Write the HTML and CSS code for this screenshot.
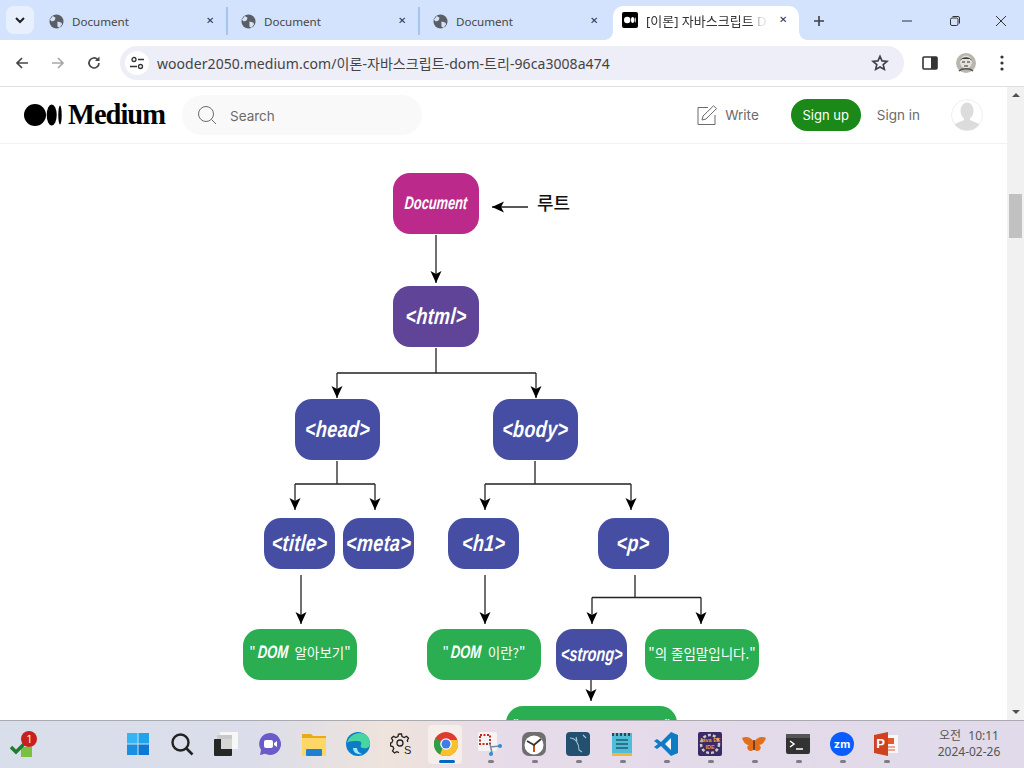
FILE: index.html
```html
<!DOCTYPE html>
<html lang="ko">
<head>
<meta charset="utf-8">
<title>[이론] 자바스크립트 DOM 트리</title>
<link rel="stylesheet" href="styles.css">
</head>
<body>
<div class="tabstrip">
  <div class="tabsearch"><svg width="12" height="12" viewBox="0 0 12 12"><path d="M2 4l4 4 4-4" fill="none" stroke="#1f1f1f" stroke-width="2"/></svg></div>
  <div class="tab tab-first">
    <svg class="favicon" viewBox="0 0 16 16"><circle cx="8" cy="8" r="7.500" fill="#5a5f66"/><path d="M4 2l3 2-1 3-3 1-2-2zM9 8l4 1 1 2-3 4-2-2z" fill="#d3e3fd"/></svg>
    <span class="tabtitle">Document</span><span class="tabclose">✕</span>
  </div>
  <div class="tab">
    <svg class="favicon" viewBox="0 0 16 16"><circle cx="8" cy="8" r="7.500" fill="#5a5f66"/><path d="M4 2l3 2-1 3-3 1-2-2zM9 8l4 1 1 2-3 4-2-2z" fill="#d3e3fd"/></svg>
    <span class="tabtitle">Document</span><span class="tabclose">✕</span>
  </div>
  <div class="tab tab-last">
    <svg class="favicon" viewBox="0 0 16 16"><circle cx="8" cy="8" r="7.500" fill="#5a5f66"/><path d="M4 2l3 2-1 3-3 1-2-2zM9 8l4 1 1 2-3 4-2-2z" fill="#d3e3fd"/></svg>
    <span class="tabtitle">Document</span><span class="tabclose">✕</span>
  </div>
  <div class="tab-active">
    <svg class="favicon-m" viewBox="0 0 16 16"><rect width="16" height="16" rx="2" fill="#000"/><circle cx="5.200" cy="8" r="3.200" fill="#fff"/><ellipse cx="10.600" cy="8" rx="1.600" ry="3" fill="#fff"/><ellipse cx="13.200" cy="8" rx=".6" ry="2.700" fill="#fff"/></svg>
    <span class="tabtitle-active">[이론] 자바스크립트 D</span><span class="tabclose tabclose-active">✕</span>
  </div>
  <svg class="newtab" width="12" height="12" viewBox="0 0 12 12"><path d="M6 1v10M1 6h10" stroke="#3c4043" stroke-width="1.600"/></svg>
  <div class="winctl">
    <svg width="12" height="12" viewBox="0 0 12 12"><path d="M1 6h10" stroke="#333" stroke-width="1"/></svg>
    <svg width="12" height="12" viewBox="0 0 12 12"><rect x="1.500" y="3" width="7.500" height="7.500" rx="1.500" fill="none" stroke="#333"/><path d="M3.500 1.500h5.500a1.500 1.500 0 0 1 1.500 1.500v5.500" fill="none" stroke="#333"/></svg>
    <svg width="12" height="12" viewBox="0 0 12 12"><path d="M1 1l10 10M11 1L1 11" stroke="#333" stroke-width="1"/></svg>
  </div>
</div>
<div class="toolbar">
  <svg class="navicon" viewBox="0 0 16 16"><path d="M14 8H3M8 3L3 8l5 5" fill="none" stroke="#474747" stroke-width="1.700"/></svg>
  <svg class="navicon" viewBox="0 0 16 16"><path d="M2 8h11M8 3l5 5-5 5" fill="none" stroke="#a8a8a8" stroke-width="1.700"/></svg>
  <svg class="navicon" viewBox="0 0 16 16"><path d="M13 8a5 5 0 1 1-1.500-3.600" fill="none" stroke="#474747" stroke-width="1.700"/><path d="M13.500 1.500v4.500H9z" fill="#474747"/></svg>
  <div class="omnibox">
    <span class="siteinfo"><svg width="16" height="16" viewBox="0 0 16 16"><circle cx="5" cy="4.500" r="2" fill="none" stroke="#333" stroke-width="1.300"/><path d="M9 4.500h6M1 11.500h7" stroke="#333" stroke-width="1.500"/><circle cx="11.500" cy="11.500" r="2" fill="none" stroke="#333" stroke-width="1.300"/></svg></span>
    <span class="url">wooder2050.medium.com/이론-자바스크립트-dom-트리-96ca3008a474</span>
    <svg class="star" width="18" height="18" viewBox="0 0 18 18"><path d="M9 2.200l2 4.700 5 .4-3.800 3.300 1.200 4.900L9 13l-4.400 2.500 1.200-4.900L2 7.300l5-.4z" fill="none" stroke="#3c4043" stroke-width="1.600"/></svg>
  </div>
  <svg class="sidepanel" width="16" height="14" viewBox="0 0 16 14"><rect x="1" y="1" width="14" height="12" rx="1" fill="none" stroke="#333" stroke-width="1.600"/><rect x="9" y="1" width="6" height="12" fill="#333"/></svg>
  <svg class="profile" width="20" height="20" viewBox="0 0 20 20"><circle cx="10" cy="10" r="10" fill="#b9b6ae"/><ellipse cx="10" cy="9" rx="6" ry="6.500" fill="#e4e1da"/><path d="M4 8c1-5 11-5 12 0l-2-2H6z" fill="#3a3a3a"/><path d="M6 9h3M11 9h3M8 13h4" stroke="#333" stroke-width="1.200"/><path d="M3 18c3-3 11-3 14 0" stroke="#555" stroke-width="1.500" fill="none"/></svg>
  <svg class="kebab" width="4" height="16" viewBox="0 0 4 16"><circle cx="2" cy="2" r="1.600" fill="#333"/><circle cx="2" cy="8" r="1.600" fill="#333"/><circle cx="2" cy="14" r="1.600" fill="#333"/></svg>
</div>
<div class="viewport">
  <div class="page">
    <header class="mhead">
      <div class="mlogo">
        <svg width="38" height="22" viewBox="0 0 38 22"><circle cx="11" cy="11" r="11" fill="#000"/><ellipse cx="27.700" cy="11" rx="5" ry="10.500" fill="#000"/><ellipse cx="36" cy="11" rx="1.700" ry="9.500" fill="#000"/></svg>
        <span class="mword">Medium</span>
      </div>
      <div class="msearch">
        <svg width="20" height="20" viewBox="0 0 20 20"><circle cx="9" cy="9" r="7.500" fill="none" stroke="#6b6b6b" stroke-width="1"/><path d="M14.500 14.500l4.500 4.500" stroke="#6b6b6b"/></svg>
        <span class="msearch-text">Search</span>
      </div>
      <div class="mright">
        <svg class="writeicon" width="20" height="20" viewBox="0 0 20 20"><path d="M11 2.500H1v17h17V10" fill="none" stroke="#6b6b6b"/><path d="M5 15l1-4L16.500 .8l3 2.800L9 14z" fill="none" stroke="#6b6b6b"/></svg>
        <span class="mlink writelink">Write</span>
        <span class="signup">Sign up</span>
        <span class="mlink signin">Sign in</span>
        <svg class="mavatar" width="32" height="32" viewBox="0 0 32 32"><defs><clipPath id="avc"><circle cx="16" cy="16" r="15.500"/></clipPath></defs><circle cx="16" cy="16" r="15.500" fill="#fff" stroke="#f0f0f0"/><g clip-path="url(#avc)" fill="#dcdcdc"><ellipse cx="16" cy="12" rx="6.500" ry="8.500"/><path d="M13 18h6v3l9 4v7H4v-7l9-4z"/></g></svg>
      </div>
    </header>
    <main class="canvas">
      <svg class="wires" width="1007" height="576" viewBox="0 144 1007 576">
        <defs><marker id="ah" markerUnits="userSpaceOnUse" markerWidth="14" markerHeight="12" refX="12" refY="6" orient="auto"><path d="M12 6L0 .5 3 6 0 11.500z" fill="#000"/></marker></defs>
        <g fill="none" stroke="#222" stroke-width="1.300">
          <path d="M528 207H492" marker-end="url(#ah)"/>
          <path d="M436 235V283" marker-end="url(#ah)"/>
          <path d="M436 348V373M337 373H536"/>
          <path d="M337 373V398" marker-end="url(#ah)"/>
          <path d="M536 373V398" marker-end="url(#ah)"/>
          <path d="M337 461V484M295 484H375"/>
          <path d="M295 484V510" marker-end="url(#ah)"/>
          <path d="M375 484V510" marker-end="url(#ah)"/>
          <path d="M535 461V484M485 484H631"/>
          <path d="M485 484V510" marker-end="url(#ah)"/>
          <path d="M631 484V510" marker-end="url(#ah)"/>
          <path d="M301 575V624" marker-end="url(#ah)"/>
          <path d="M485 575V624" marker-end="url(#ah)"/>
          <path d="M635 575V597.500M592 597.500H701"/>
          <path d="M592 597.500V624" marker-end="url(#ah)"/>
          <path d="M701 597.500V624" marker-end="url(#ah)"/>
          <path d="M591 680V701" marker-end="url(#ah)"/>
        </g>
      </svg>
      <span class="rootlabel">루트</span>
      <div class="node big n-doc"><span class="tag tag-doc">Document</span></div>
      <div class="node big n-html"><span class="tag">&lt;html&gt;</span></div>
      <div class="node big blue n-head"><span class="tag">&lt;head&gt;</span></div>
      <div class="node big blue n-body"><span class="tag">&lt;body&gt;</span></div>
      <div class="node small blue n-title"><span class="tag">&lt;title&gt;</span></div>
      <div class="node small blue n-meta"><span class="tag">&lt;meta&gt;</span></div>
      <div class="node small blue n-h1"><span class="tag">&lt;h1&gt;</span></div>
      <div class="node small blue n-p"><span class="tag">&lt;p&gt;</span></div>
      <div class="node small blue n-strong"><span class="tag tag-strong">&lt;strong&gt;</span></div>
      <div class="node wide green n-t1"><span class="gtext">"<b class="dom">DOM</b> 알아보기"</span></div>
      <div class="node wide green n-t2"><span class="gtext">"<b class="dom">DOM</b> 이란?"</span></div>
      <div class="node wide green n-t3"><span class="t3text">"의 줄임말입니다."</span></div>
      <div class="node green n-t4"><span>"</span><span>"</span></div>
    </main>
  </div>
  <div class="scrollbar">
    <div class="sbtn"><span class="tri-up"></span></div>
    <div class="strack"><div class="sthumb"></div></div>
    <div class="sbtn"><span class="tri-down"></span></div>
  </div>
</div>
<footer class="taskbar">
  <div class="tray-left">
    <svg width="30" height="26" viewBox="0 0 30 26"><rect x="11" y="14" width="11" height="10" fill="#7ac142"/><path d="M1 14l5 5 9-9" fill="none" stroke="#1e7d2e" stroke-width="3.500"/></svg>
    <span class="badge">1</span>
  </div>
  <div class="tbicons">
    <div class="tb"><svg viewBox="0 0 24 24"><rect x="1" y="1" width="10.500" height="10.500" fill="#35b6f2"/><rect x="12.500" y="1" width="10.500" height="10.500" fill="#1fa3ee"/><rect x="1" y="12.500" width="10.500" height="10.500" fill="#1a8ee0"/><rect x="12.500" y="12.500" width="10.500" height="10.500" fill="#0b78d4"/></svg></div>
    <div class="tb"><svg viewBox="0 0 24 24"><circle cx="10.500" cy="10.500" r="8" fill="none" stroke="#222" stroke-width="2.400"/><path d="M16 16l6.500 6.500" stroke="#222" stroke-width="2.600"/></svg></div>
    <div class="tb"><svg viewBox="0 0 24 24"><rect x="6" y="0" width="18" height="17" rx="1" fill="#f7f7f7"/><rect x="3" y="3" width="15" height="14" fill="#c9c9c9"/><rect x="0" y="7" width="18" height="17" rx="1" fill="#262626"/><rect x="7" y="7" width="11" height="10" fill="#d6d6d6"/></svg></div>
    <div class="tb"><svg viewBox="0 0 24 24"><path d="M12 1a11 11 0 1 1-5 20.800L2 23l1-5A11 11 0 0 1 12 1z" fill="#6b5bc9"/><rect x="6" y="8" width="9" height="8" rx="2" fill="#fff"/><path d="M16 11l3-2v6l-3-2z" fill="#fff"/></svg></div>
    <div class="tb"><svg viewBox="0 0 24 24"><path d="M0 2h9l2 2h13v20H0z" fill="#e8a91c"/><rect x="0" y="6" width="24" height="18" fill="#fcd765"/><rect x="4" y="17" width="16" height="7" rx="1" fill="#1f7fd1"/></svg></div>
    <div class="tb"><svg viewBox="0 0 24 24"><circle cx="12" cy="12" r="12" fill="#0c7cc7"/><path d="M1 11C3 3 12-1 18 2c4 2 6 6 6 10 0 3-3 5-7 4-2 0-3-2-2-3 1-2 0-4-3-4-5 0-9 0-11 2z" fill="#48d6a0"/><path d="M7 16c0 4 4 7 9 6-3-1-5-3-5-6z" fill="#9fe6f5"/></svg></div>
    <div class="tb"><svg viewBox="0 0 24 24"><circle cx="10" cy="11" r="3" fill="none" stroke="#222" stroke-width="1.300"/><path d="M8.500 2h3l.5 2.500 2.300 1 2.200-1.300 2 2-1.200 2.200.5 1.600M8.500 2L8 4.500l-2.300 1-2.200-1.300-2 2 1.300 2.200-1 2.300L.5 11v3l2.300.5 1 2.300-1.300 2.200 2 2 2.200-1.300 2.300.9" fill="none" stroke="#222" stroke-width="1.300"/><text class="os" x="14" y="22">S</text></svg></div>
    <div class="tb tb-active"><svg viewBox="0 0 24 24"><circle cx="12" cy="12" r="12" fill="#e0392d"/><path d="M12 12L6 22.400A12 12 0 0 1 1.600 6z" fill="#2e9f46"/><path d="M12 24A12 12 0 0 0 23.400 8H12L6 22.400A12 12 0 0 0 12 24z" fill="#fbc02d"/><circle cx="12" cy="12" r="5.800" fill="#fff"/><circle cx="12" cy="12" r="4.500" fill="#3f7ee8"/></svg></div>
    <div class="tb tb-dot"><svg viewBox="0 0 24 24"><rect x="0" y="0" width="19" height="19" rx="2" fill="#f4f4f4"/><rect x="2" y="3" width="10" height="9" fill="none" stroke="#c4291c" stroke-width="2" stroke-dasharray="2 1.500"/><path d="M12 12l2 9M22 14l-10 1" stroke="#7c8aa0" stroke-width="1.500"/><circle cx="22" cy="14" r="2" fill="#2c8de0"/><circle cx="13" cy="22" r="2" fill="#2c8de0"/></svg></div>
    <div class="tb tb-dot"><svg viewBox="0 0 24 24"><rect x="0" y="0" width="24" height="24" rx="7" fill="#6f6f6f"/><circle cx="12" cy="13" r="9.500" fill="#fff"/><path d="M5 9l7 4 7-6M12 13v7" fill="none" stroke="#333" stroke-width="1.800"/><path d="M12 14v6" stroke="#d9501e" stroke-width="1.800"/></svg></div>
    <div class="tb tb-dot"><svg viewBox="0 0 24 24"><rect width="24" height="24" rx="4" fill="#24506f"/><path d="M4 6c6 0 9 6 9 12l3 2M11 9l-1-4M17 3l3 3" fill="none" stroke="#a8c6d8" stroke-width="1.100"/></svg></div>
    <div class="tb tb-dot"><svg viewBox="0 0 24 24"><rect x="2" y="1" width="20" height="23" fill="#4fbcd8"/><rect x="2" y="21" width="20" height="3" fill="#f2b632"/><path d="M3 1v3M7 1v3M11 1v3M15 1v3M19 1v3" stroke="#222" stroke-width="1.500"/><path d="M6 8h12M6 12h12M6 16h12" stroke="#235c72" stroke-width="1.600"/></svg></div>
    <div class="tb tb-dot"><svg viewBox="0 0 24 24"><path d="M17 0l7 3v18l-7 3L7 14l-4 3-3-2 4-3-4-3 3-2 4 3z" fill="#0f7bc4"/><path d="M17 6v12l-6-6z" fill="#f4f4f4"/></svg></div>
    <div class="tb tb-dot"><svg viewBox="0 0 24 24"><rect width="24" height="24" rx="2" fill="#3a2a66"/><circle cx="12" cy="12" r="9" fill="none" stroke="#c9c9c9" stroke-width="2.500" stroke-dasharray="3 2"/><text class="ee" x="12" y="10">Java EE</text><text class="ee" x="12" y="17">IDE</text></svg></div>
    <div class="tb tb-dot"><svg viewBox="0 0 24 24"><path d="M12 10C9 5 4 4 0 6c2 5 4 7 7 7-3 1-2 6 2 6 2 0 3-2 3-4 0 2 1 4 3 4 4 0 5-5 2-6 3 0 5-2 7-7-4-2-9-1-12 4z" fill="#e0701e"/><path d="M12 8v10" stroke="#5a2a10" stroke-width="1.500"/></svg></div>
    <div class="tb tb-dot"><svg viewBox="0 0 24 24"><rect y="2" width="24" height="20" rx="2" fill="#333"/><rect y="2" width="24" height="4" fill="#555"/><path d="M4 9l4 3-4 3" fill="none" stroke="#fff" stroke-width="1.500"/><path d="M10 17h7" stroke="#fff" stroke-width="1.500"/></svg></div>
    <div class="tb tb-dot"><svg viewBox="0 0 24 24"><circle cx="12" cy="12" r="12" fill="#0b5cff"/><text class="zm" x="12" y="15.500">zm</text></svg></div>
    <div class="tb tb-dot"><svg viewBox="0 0 24 24"><rect x="11" y="3" width="13" height="18" fill="#f7f7f7"/><rect x="14" y="6" width="6" height="6" fill="#e3582f"/><path d="M14 15h7M14 18h7" stroke="#e3582f"/><path d="M0 3l14-3v24L0 21z" fill="#cf4220"/><text class="ppt" x="6.500" y="16">P</text></svg></div>
  </div>
  <div class="clock"><span class="clock-time">오전 10:11</span><span>2024-02-26</span></div>
</footer>
</body>
</html>
```
FILE: styles.css
```css
* { box-sizing: border-box; }
html, body { margin: 0; padding: 0; }
body {
  width: 1024px; height: 768px; overflow: hidden;
  display: flex; flex-direction: column;
  font-family: "Noto Sans", "Noto Sans CJK KR", sans-serif;
  background: #fff;
}
/* tab strip */
.tabstrip { height: 40px; flex: none; background: #d3e3fd; display: flex; align-items: flex-start; padding-left: 6px; position: relative; }
.tabsearch { width: 28px; height: 28px; margin-top: 6px; border-radius: 8px; background: #e9f0fd; display: flex; align-items: center; justify-content: center; }
.tab { width: 192px; height: 28px; margin-top: 7px; display: flex; align-items: center; padding-left: 13px; border-right: 2px solid #a8c3ee; }
.tab-first { margin-left: 2px; }
.tab-last { border-right-color: transparent; }
.tab .tabclose { margin-left: auto; margin-right: 10px; }
.favicon { width: 15px; height: 15px; flex: none; }
.tabtitle { margin-left: 8px; font-size: 11.600px; color: #444746; }
.tabclose { font-size: 10px; color: #333; width: 10px; line-height: 10px; font-family: "DejaVu Sans", sans-serif; }
.tab-active { width: 186px; height: 34px; margin-top: 6px; margin-left: 1px; background: #fff; border-radius: 10px 10px 0 0; display: flex; align-items: center; padding: 0 10px 6px 9px; position: relative; }
.tab-active::before, .tab-active::after { content: ""; position: absolute; bottom: 0; width: 8px; height: 8px; }
.tab-active::before { left: -8px; background: radial-gradient(circle at 0 0, #d3e3fd 7.500px, #fff 8px); }
.tab-active::after { right: -8px; background: radial-gradient(circle at 100% 0, #d3e3fd 7.500px, #fff 8px); }
.favicon-m { width: 16px; height: 16px; flex: none; }
.tabtitle-active { margin-left: 8px; font-size: 13px; color: #333; white-space: nowrap; width: 120px; overflow: hidden; -webkit-mask-image: linear-gradient(90deg, #000 88%, rgba(0,0,0,.15) 96%); mask-image: linear-gradient(90deg, #000 88%, rgba(0,0,0,.15) 96%); }
.tabclose-active { margin-left: auto; margin-right: 0; font-weight: 700; }
.newtab { margin-left: 14px; margin-top: 15px; }
.winctl { margin-left: auto; margin-top: 15px; display: flex; gap: 36px; padding-right: 17px; }
.winctl svg:last-child { margin-left: -2px; }
/* toolbar */
.toolbar { height: 47px; flex: none; background: #fff; border-radius: 10px 10px 0 0; border-bottom: 1px solid #e0e0e0; display: flex; align-items: center; padding: 0 0 1px 14px; }
.navicon { width: 16px; height: 16px; margin-right: 20px; flex: none; }
.navicon:nth-child(3) { margin-right: 18px; }
.omnibox { width: 784px; height: 34px; border-radius: 17px; background: #edeef7; display: flex; align-items: center; padding: 0 15px 0 5px; flex: none; }
.siteinfo { width: 24px; height: 24px; border-radius: 50%; background: #fff; display: flex; align-items: center; justify-content: center; flex: none; }
.url { margin-left: 8px; font-size: 14px; letter-spacing: .06px; color: #444; white-space: nowrap; }
.star { margin-left: auto; }
.sidepanel { margin-left: 18px; flex: none; }
.profile { margin-left: 18px; flex: none; }
.kebab { margin-left: 24px; flex: none; }
/* page */
.viewport { flex: 1; display: flex; min-height: 0; }
.page { flex: 1; display: flex; flex-direction: column; min-width: 0; }
.mhead { height: 57px; flex: none; border-bottom: 1px solid #f2f2f2; display: flex; align-items: center; padding: 0 24px; }
.mlogo { display: flex; align-items: center; gap: 6px; width: 158px; flex: none; }
.mword { font-family: "Liberation Serif", serif; font-weight: 700; font-size: 28.500px; letter-spacing: -1px; color: #000; line-height: 1; }
.msearch { width: 240px; height: 40px; border-radius: 20px; background: #f9f9f9; display: flex; align-items: center; padding-left: 15px; flex: none; }
.msearch-text { margin-left: 13px; padding-top: 1px; font-size: 13.500px; color: #6b6b6b; font-family: "Inter", sans-serif; }
.mright { margin-left: auto; display: flex; align-items: center; }
.mlink { font-family: "Inter", sans-serif; font-size: 13.500px; color: #6b6b6b; }
.writelink { margin-left: 8px; }
.signup { margin-left: 32px; width: 70px; height: 32px; border-radius: 16px; background: #1a8917; color: #fff; font-family: "Inter", sans-serif; font-size: 13px; display: flex; align-items: center; justify-content: center; }
.signin { margin-left: 16px; }
.mavatar { margin-left: 31px; }
.canvas { flex: 1; position: relative; overflow: hidden; background: #fff; }
.wires { position: absolute; left: 0; top: 0; }
.rootlabel { position: absolute; left: 537px; top: 46px; font-family: "Noto Sans CJK KR", sans-serif; font-weight: 500; font-size: 18px; line-height: 24px; color: #111; }
.node { position: absolute; display: flex; align-items: center; justify-content: center; color: #fff; border-radius: 17px; white-space: nowrap; }
.big { width: 85px; height: 61px; }
.small { width: 71px; height: 51px; }
.wide { width: 114px; height: 51px; font-size: 13.500px; font-family: "Noto Sans CJK KR", sans-serif; padding-bottom: 4px; }
.blue { background: #454ea3; }
.green { background: #2bad52; }
.tag { display: inline-block; font-family: "Liberation Sans", sans-serif; font-weight: 700; font-style: italic; font-size: 23px; letter-spacing: .5px; transform: scaleX(.78) skewX(-6deg); }
.tag-doc { font-size: 18px; letter-spacing: 0; transform: scaleX(.71) skewX(-6deg); }
.tag-strong { font-size: 20px; letter-spacing: 0; transform: scaleX(.72) skewX(-6deg); }
.dom { display: inline-block; font-family: "Liberation Sans", sans-serif; font-style: italic; font-weight: 700; font-size: 18px; transform: scaleX(.72) skewX(-6deg); margin: 0 -3px 0 -4px; }
.t3text { font-size: 13.500px; }
.n-doc { left: 393px; top: 29px; background: #bb2a8a; width: 86px; }
.n-html { left: 393px; top: 142px; background: #5f4497; width: 86px; }
.n-head { left: 295px; top: 255px; }
.n-body { left: 493px; top: 255px; }
.n-title { left: 264px; top: 374px; }
.n-meta { left: 343px; top: 374px; }
.n-h1 { left: 448px; top: 374px; }
.n-p { left: 598px; top: 374px; }
.n-strong { left: 556px; top: 485px; }
.n-t1 { left: 243px; top: 485px; }
.n-t2 { left: 427px; top: 485px; }
.n-t3 { left: 645px; top: 485px; }
.n-t4 { left: 506px; top: 562px; width: 171px; height: 51px; justify-content: space-between; align-items: flex-start; padding: 8px 7px 0; font-size: 14px; font-family: "Noto Sans", sans-serif; }
/* scrollbar */
.scrollbar { width: 17px; flex: none; background: #f1f1f1; display: flex; flex-direction: column; }
.sbtn { height: 16px; flex: none; display: flex; align-items: center; justify-content: center; }
.tri-up { border-left: 4px solid transparent; border-right: 4px solid transparent; border-bottom: 4px solid #505050; }
.tri-down { border-left: 4px solid transparent; border-right: 4px solid transparent; border-top: 4px solid #505050; }
.strack { flex: 1; padding-top: 91px; }
.sthumb { width: 13px; height: 44px; margin-left: 2px; background: #c1c1c1; }
/* taskbar */
.taskbar { height: 48px; flex: none; border-top: 1px solid #a9abb0; background: linear-gradient(90deg, #d9deeb 0%, #dbdeea 25%, #efe3dc 38%, #e6dbe9 50%, #e0daea 100%); display: flex; align-items: center; position: relative; }
.tray-left { width: 116px; flex: none; padding-left: 10px; padding-top: 2px; position: relative; display: flex; }
.badge { position: absolute; left: 21px; top: 0; width: 16px; height: 16px; border-radius: 50%; background: #c8201c; color: #fff; font-size: 10px; line-height: 16px; text-align: center; font-family: "Inter", sans-serif; }
.tbicons { display: flex; }
.tb { width: 44px; height: 47px; display: flex; align-items: center; justify-content: center; position: relative; padding-bottom: 2px; }
.tb svg { width: 24px; height: 24px; }
.tb-active::before { content: ""; position: absolute; left: 4px; right: 6px; top: 4px; bottom: 4px; background: #f6eeea; border-radius: 4px; }
.tb-active svg { position: relative; }
.tb-active::after { content: ""; position: absolute; left: 15px; right: 13px; bottom: 5px; height: 3px; border-radius: 2px; background: #0067c0; }
.tb-dot::after { content: ""; position: absolute; left: 20px; right: 18px; bottom: 5px; height: 3px; border-radius: 2px; background: #7d7d83; }
.os { font-family: "Liberation Sans", sans-serif; font-size: 11px; fill: #222; }
.ee { font-family: "Liberation Sans", sans-serif; font-size: 5.500px; fill: #e8a030; font-weight: 700; text-anchor: middle; }
.zm { font-family: "Inter", sans-serif; font-size: 11px; font-weight: 700; fill: #fff; text-anchor: middle; }
.ppt { font-family: "Liberation Sans", sans-serif; font-size: 13px; font-weight: 700; fill: #fff; text-anchor: middle; }
.clock { margin-left: auto; width: 80px; margin-right: 15px; margin-top: -2px; display: flex; flex-direction: column; align-items: center; font-size: 12px; line-height: 16px; color: #555; }
.clock-time { word-spacing: 4px; }
```
